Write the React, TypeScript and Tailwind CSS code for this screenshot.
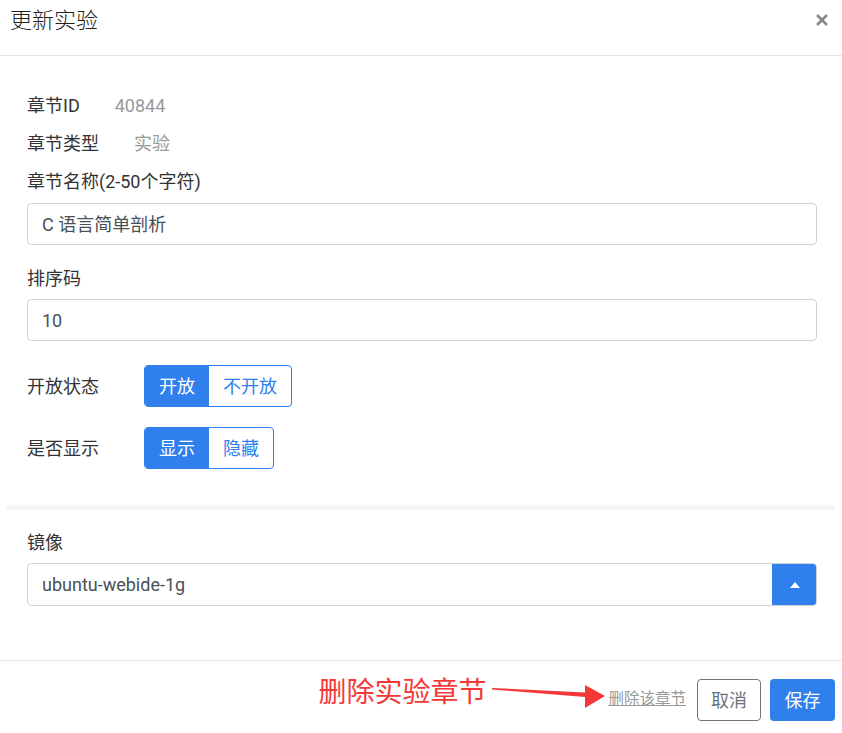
import React from "react";

const font = { fontFamily: 'Roboto, "Noto Sans CJK SC", sans-serif' };

export default function App() {
  return (
    <div
      className="w-[842px] h-[733px] bg-white text-[#333] overflow-hidden"
      style={font}
    >
      {/* Header */}
      <div className="h-[56px] border-b border-[#e5e5e5] flex items-center justify-between pl-[10px] pr-[10px]">
        <div
          className="text-[22px] text-[#222] leading-none -mt-[14px]"
          style={{ fontWeight: 300 }}
        >
          更新实验
        </div>
        <svg width="14" height="14" viewBox="0 0 14 14" className="-mt-[15px] mr-[3px]">
          <path d="M2 2 L12 12 M12 2 L2 12" stroke="#888" strokeWidth="2.6" strokeLinecap="butt" />
        </svg>
      </div>

      {/* Body */}
      <div className="pl-[27px] pr-[25px] pt-[30px] text-[18px]">
        <div className="h-[38px] flex items-center">
          <span>章节ID</span>
          <span className="ml-[35px] text-[#999]">40844</span>
        </div>
        <div className="h-[38px] flex items-center">
          <span>章节类型</span>
          <span className="ml-[35px] text-[#999]">实验</span>
        </div>
        <div className="h-[38px] flex items-center">章节名称(2-50个字符)</div>
        <div className="mt-[3px] h-[42px] border border-[#ced4da] rounded-[4px] flex items-center px-[14px] text-[#495057]">
          C 语言简单剖析
        </div>

        <div className="mt-[14px] h-[38px] flex items-center">排序码</div>
        <div className="mt-[2px] h-[42px] border border-[#ced4da] rounded-[4px] flex items-center px-[14px] text-[#495057]">
          10
        </div>

        <div className="mt-[24px] flex items-center h-[42px]">
          <span className="w-[117px]">开放状态</span>
          <div className="flex h-[42px] border border-[#2f80ed] rounded-[4px] overflow-hidden">
            <div className="w-[64px] bg-[#2f80ed] text-white flex items-center justify-center">开放</div>
            <div className="w-[82px] text-[#2f80ed] flex items-center justify-center">不开放</div>
          </div>
        </div>
        <div className="mt-[20px] flex items-center h-[42px]">
          <span className="w-[117px]">是否显示</span>
          <div className="flex h-[42px] border border-[#2f80ed] rounded-[4px] overflow-hidden">
            <div className="w-[64px] bg-[#2f80ed] text-white flex items-center justify-center">显示</div>
            <div className="w-[64px] text-[#2f80ed] flex items-center justify-center">隐藏</div>
          </div>
        </div>
      </div>

      <div className="mt-[36px] ml-[6px] mr-[7px] h-[5px] bg-[#f5f5f5]" />

      <div className="pl-[27px] pr-[25px] text-[18px]">
        <div className="mt-[13px] h-[38px] flex items-center">镜像</div>
        <div className="mt-[2px] h-[43px] border border-[#ced4da] rounded-[4px] flex items-stretch text-[#495057] overflow-hidden">
          <div className="flex-1 flex items-center px-[14px]">ubuntu-webide-1g</div>
          <div className="w-[45px] bg-[#2f80ed] flex items-center justify-center -my-px -mr-px">
            <svg width="10" height="6" viewBox="0 0 10 6">
              <path d="M5 0 L10 6 L0 6 Z" fill="#fff" />
            </svg>
          </div>
        </div>
      </div>

      {/* Footer */}
      <div className="mt-[54px] border-t border-[#e5e5e5] pt-[18px] pr-[7px] flex items-center justify-end">
        <span className="text-[28px] text-[#f43838] leading-none -mt-[14px]">
          删除实验章节
        </span>
        <svg width="122" height="30" viewBox="0 0 122 30" className="-mt-[3px]">
          <path d="M6 4 L99 8.5 L99 1 L119 12 L99 24 L99 13 L6 5.5 Z" fill="#f43838" />
        </svg>
        <span className="text-[15.5px] text-[#999] underline mr-[11px]">删除该章节</span>
        <button className="h-[42px] w-[64px] border border-[#6c757d] rounded-[4px] text-[18px] text-[#6c757d] mr-[9px]">
          取消
        </button>
        <button className="h-[42px] w-[65px] bg-[#2f80ed] rounded-[4px] text-[18px] text-white">
          保存
        </button>
      </div>
    </div>
  );
}
